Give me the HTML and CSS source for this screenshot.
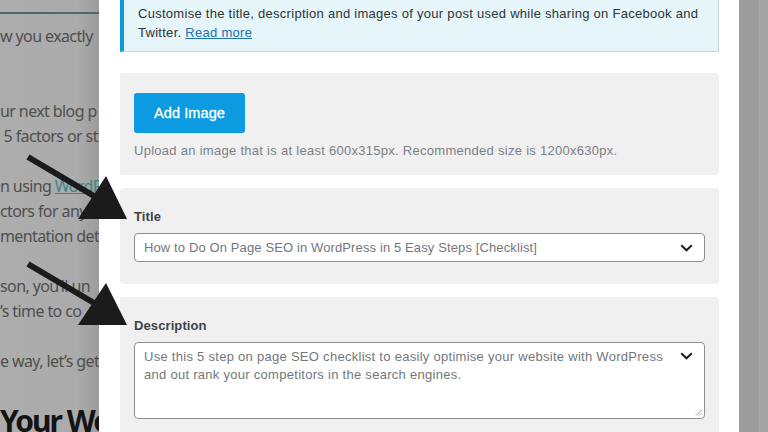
FILE: index.html
```html
<!DOCTYPE html>
<html>
<head>
<meta charset="utf-8">
<link rel="stylesheet" href="styles.css">
</head>
<body>
<div class="page">
  <div class="article">
    <div class="rule"></div>
    <p class="para">w you exactly<br>&nbsp;</p>
    <p class="para">ur next blog p<br>&nbsp;5 factors or st</p>
    <p class="para">n using <a class="alink">WordP</a><br>ctors for any<br>mentation deta</p>
    <p class="para">son, you’ll un<br>’s time to co</p>
    <p class="para">e way, let’s get</p>
    <h2 class="ahead">Your Wo</h2>
  </div>

  <div class="modal">
    <div class="notice">
      <p>Customise the title, description and images of your post used while sharing on Facebook and Twitter. <a class="link">Read more</a></p>
    </div>

    <div class="panel image-panel">
      <button class="btn">Add Image</button>
      <p class="help">Upload an image that is at least 600x315px. Recommended size is 1200x630px.</p>
    </div>

    <div class="panel field-panel">
      <label class="label">Title</label>
      <div class="select">
        <span class="value">How to Do On Page SEO in WordPress in 5 Easy Steps [Checklist]</span>
        <svg class="chev" width="13" height="8" viewBox="0 0 13 8"><path d="M1.2 1.2 L6.5 6.3 L11.8 1.2" fill="none" stroke="#1e1e1e" stroke-width="2"/></svg>
      </div>
    </div>

    <div class="panel field-panel">
      <label class="label">Description</label>
      <div class="textarea">
        <span class="value">Use this 5 step on page SEO checklist to easily optimise your website with WordPress and out rank your competitors in the search engines.</span>
        <svg class="chev" width="13" height="8" viewBox="0 0 13 8"><path d="M1.2 1.2 L6.5 6.3 L11.8 1.2" fill="none" stroke="#1e1e1e" stroke-width="2"/></svg>
        <svg class="grip" width="7" height="7" viewBox="0 0 7 7"><path d="M6.5 1 L1 6.5 M6.5 4 L4 6.5" stroke="#9a9a9a" stroke-width="1"/></svg>
      </div>
    </div>
  </div>

  <div class="scroll">
    <div class="track"></div>
    <div class="edge"></div>
  </div>

  <svg class="arrows" width="768" height="432" viewBox="0 0 768 432">
    <line x1="28" y1="157" x2="94" y2="196" stroke="#1b1b1b" stroke-width="6"/>
    <polygon points="106,176 78,219 127,219" fill="#1b1b1b"/>
    <line x1="28" y1="264" x2="94" y2="303" stroke="#1b1b1b" stroke-width="6"/>
    <polygon points="106,283 78,325 127,325" fill="#1b1b1b"/>
  </svg>
</div>
</body>
</html>
```

FILE: styles.css
```css
* { box-sizing: border-box; }
html, body { margin: 0; padding: 0; }
body { width: 768px; height: 432px; overflow: hidden; background: #fff; }

.page {
  position: relative;
  display: flex;
  width: 768px;
  height: 432px;
  overflow: hidden;
}

/* ---------- article behind the overlay ---------- */
.article {
  flex: 0 0 99px;
  height: 432px;
  overflow: hidden;
  background: linear-gradient(to right, #adadad 0, #ababab 78%, #9c9c9c 100%);
  font-family: "Noto Sans", "Open Sans", sans-serif;
  font-size: 16px;
  letter-spacing: -0.6px;
  line-height: 25px;
  color: #4f4f4f;
  white-space: nowrap;
  padding-top: 12px;
}
.rule {
  height: 2px;
  background: #4c6770;
  margin-bottom: 10px;
}
.para { margin: 0 0 25px 0; }
.alink { color: #3d8585; text-decoration: underline; }
.ahead {
  margin: 0;
  font-size: 30px;
  line-height: 44px;
  font-weight: 700;
  color: #141414;
  letter-spacing: -2px;
}

/* ---------- modal ---------- */
.modal {
  flex: 0 0 640px;
  height: 432px;
  background: #fff;
  padding: 0 20px 0 21px;
  font-family: "Liberation Sans", Arial, sans-serif;
  font-size: 13px;
  letter-spacing: 0.28px;
  color: #2c3338;
}
.notice {
  background: #e5f5fa;
  border: 1px solid #c8d7dc;
  border-top: none;
  border-left: 4px solid #0b9ad8;
  padding: 4px 12px 9px 14px;
  margin-bottom: 21px;
}
.notice p { margin: 0; line-height: 19px; color: #2f3438; }
.link { color: #2271b1; text-decoration: underline; }

.panel {
  background: #f0f0f1;
  border-radius: 4px;
  padding: 20px 14px;
}
.image-panel { padding: 20px 14px 15px; margin-bottom: 13px; }
.btn {
  display: block;
  width: 111px;
  height: 40px;
  padding: 0;
  background: #0c9be0;
  border: none;
  border-radius: 3px;
  color: #fff;
  font-family: "Liberation Sans", Arial, sans-serif;
  font-size: 14.5px;
  font-weight: 400;
  letter-spacing: 0.1px;
  -webkit-text-stroke: 0.3px #fff;
}
.help { margin: 9px 0 0; line-height: 18px; color: #7c8085; }

.field-panel { padding: 20px 14px 22px; margin-bottom: 13px; }
.label {
  display: block;
  font-weight: 700;
  color: #3c434a;
  line-height: 18px;
  margin-bottom: 7px;
  letter-spacing: 0.1px;
}
.select {
  position: relative;
  height: 29px;
  background: #fff;
  border: 1px solid #8c8f94;
  border-radius: 4px;
  padding: 0 40px 0 9px;
  display: flex;
  align-items: center;
  color: #73777c;
  letter-spacing: 0.12px;
}
.textarea {
  position: relative;
  height: 77px;
  background: #fff;
  border: 1px solid #8c8f94;
  border-radius: 4px;
  padding: 5px 40px 0 9px;
  line-height: 18px;
  color: #73777c;
}
.chev { position: absolute; right: 11px; top: 10px; }
.textarea .chev { top: 9px; }
.grip { position: absolute; right: 2px; bottom: 2px; }

/* ---------- right overlay strip ---------- */
.scroll { flex: 1 1 auto; display: flex; height: 432px; }
.track { flex: 0 0 20px; background: #9d9d9d; }
.edge { flex: 1 1 auto; background: #a3a3a3; border-left: 1px solid #aaa; }

/* ---------- annotation arrows ---------- */
.arrows { position: absolute; left: 0; top: 0; pointer-events: none; }
```
